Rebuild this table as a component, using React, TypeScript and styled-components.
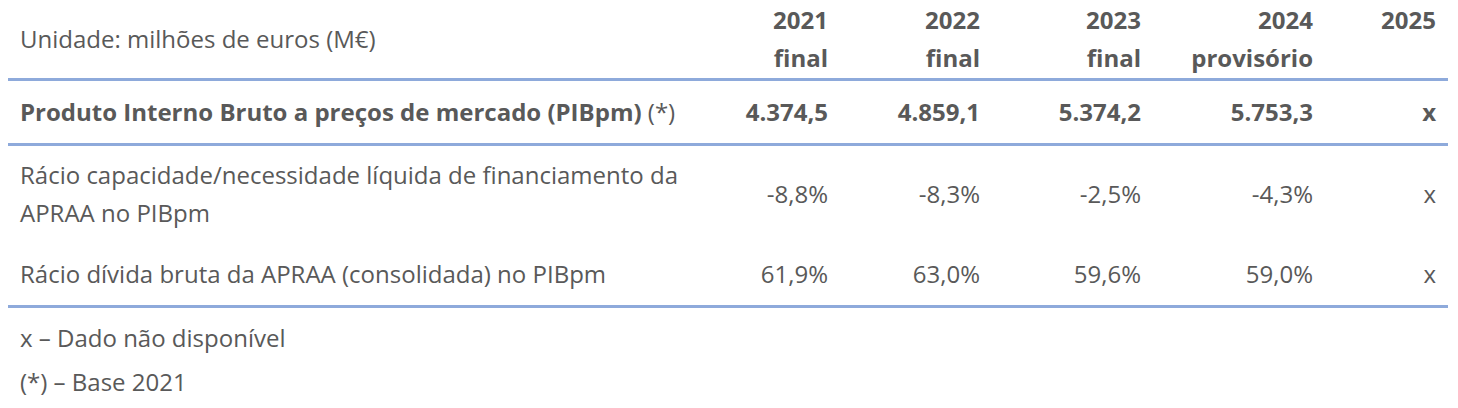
import React from 'react';
import styled, { createGlobalStyle } from 'styled-components';

const GlobalStyle = createGlobalStyle`
  html, body {
    margin: 0;
    padding: 0;
    background: #ffffff;
  }
  body {
    font-family: 'Open Sans', 'Liberation Sans', sans-serif;
    color: #595959;
  }
`;

const Wrapper = styled.div`
  padding: 0 10px 0 8px;
  width: 1440px;
`;

const Table = styled.table`
  width: 1440px;
  border-collapse: collapse;
  table-layout: fixed;
  font-size: 24px;
  line-height: 38px;
`;

const HeadCell = styled.th<{ $first?: boolean }>`
  font-weight: ${p => (p.$first ? 400 : 700)};
  text-align: ${p => (p.$first ? 'left' : 'right')};
  padding: 1px 12px 1px 12px;
  vertical-align: middle;
  border-bottom: 3px solid #8eaadb;
`;

const Row = styled.tr<{ $last?: boolean }>`
  td {
    border-bottom: ${p => (p.$last ? '3px solid #8eaadb' : 'none')};
  }
`;

const Cell = styled.td<{ $label?: boolean; $bold?: boolean; $ruled?: boolean; $tight?: boolean }>`
  text-align: ${p => (p.$label ? 'left' : 'right')};
  font-weight: ${p => (p.$bold ? 700 : 400)};
  padding: ${p => (p.$tight ? '10px 12px 11px' : '12px 12px')};
  vertical-align: middle;
  border-bottom: ${p => (p.$ruled ? '3px solid #8eaadb' : 'none')};
`;

const Star = styled.span`
  font-weight: 400;
`;

const Notes = styled.div`
  padding: 8px 0 0 12px;
  font-size: 24px;
  line-height: 44px;
`;

const cols = [684, 148, 152, 161, 172, 123];

const header = [
  ['2021', 'final'],
  ['2022', 'final'],
  ['2023', 'final'],
  ['2024', 'provisório'],
  ['2025', ''],
];

const rows = [
  { label: 'Rácio capacidade/necessidade líquida de financiamento da APRAA no PIBpm', values: ['-8,8%', '-8,3%', '-2,5%', '-4,3%', 'x'] },
  { label: 'Rácio dívida bruta da APRAA (consolidada) no PIBpm', values: ['61,9%', '63,0%', '59,6%', '59,0%', 'x'] },
];

export default function App() {
  return (
    <>
      <GlobalStyle />
      <Wrapper>
        <Table>
          <colgroup>
            {cols.map((w, i) => (
              <col key={i} style={{ width: w }} />
            ))}
          </colgroup>
          <thead>
            <tr>
              <HeadCell $first>Unidade: milhões de euros (M€)</HeadCell>
              {header.map(([y, s]) => (
                <HeadCell key={y}>
                  {y}
                  <br />
                  {s || '\u00a0'}
                </HeadCell>
              ))}
            </tr>
          </thead>
          <tbody>
            <tr>
              <Cell $label $bold $ruled>
                Produto Interno Bruto a preços de mercado (PIBpm) <Star>(*)</Star>
              </Cell>
              {['4.374,5', '4.859,1', '5.374,2', '5.753,3', 'x'].map(v => (
                <Cell key={v} $bold $ruled>
                  {v}
                </Cell>
              ))}
            </tr>
            {rows.map((r, i) => (
              <Row key={r.label} $last={i === rows.length - 1}>
                <Cell $label $tight={i === 0}>
                  {r.label}
                </Cell>
                {r.values.map((v, j) => (
                  <Cell key={j} $tight={i === 0}>
                    {v}
                  </Cell>
                ))}
              </Row>
            ))}
          </tbody>
        </Table>
        <Notes>
          <div>x – Dado não disponível</div>
          <div>(*) – Base 2021</div>
        </Notes>
      </Wrapper>
    </>
  );
}
